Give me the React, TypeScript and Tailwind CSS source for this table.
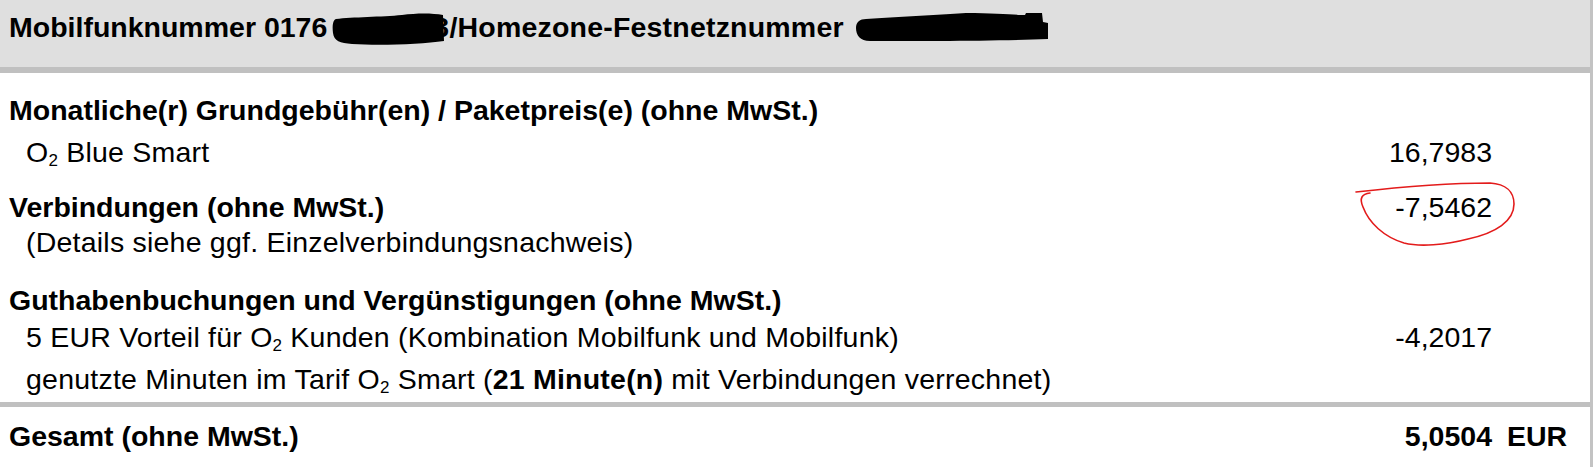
import React from "react";

function Row({
  label,
  value,
  after,
}: {
  label: React.ReactNode;
  value?: string;
  after?: React.ReactNode;
}) {
  return (
    <div className="flex h-[28px] whitespace-nowrap">
      <div className="flex-1 pl-[26px] tracking-[0.22px]">{label}</div>
      <div className="text-right">{value}</div>
      <div className="w-[98px] shrink-0">{after}</div>
    </div>
  );
}

function O2() {
  return (
    <>
      O<sub className="text-[17px]">2</sub>
    </>
  );
}

export default function App() {
  return (
    <div className="relative w-full h-[467px] bg-white text-black font-['Liberation_Sans',Arial,sans-serif] text-[28.5px] leading-[28px] border-r-[3px] border-[#c3c3c3] overflow-hidden">
      <header className="h-[73px] bg-[#dfdfdf] border-b-[6px] border-[#c0c0c0] pl-[9px] pt-[13px] flex items-start font-bold whitespace-nowrap">
        <span>Mobilfunknummer 0176</span>
        <svg
          width="112"
          height="33"
          viewBox="0 0 112 33"
          className="relative z-10 ml-[5px] -mr-[11px] shrink-0"
        >
          <path
            d="M4 6 C20 4 50 4 70 2 C85 0 100 0 111 2 L112 28 C90 31 50 33 20 31 C8 30 2 28 1 20 C0 12 1 7 4 6 Z"
            fill="#000"
          />
        </svg>
        <span className="tracking-[0.2px]">3/Homezone-Festnetznummer</span>
        <svg
          width="193"
          height="29"
          viewBox="0 0 193 29"
          className="ml-[12px] shrink-0"
        >
          <path
            d="M10 6 C40 4 80 2 110 0 C140 0 160 2 169 2 L170 0 L186 0 L187 9 L192 10 L192 26 C140 28 60 28 14 28 C4 28 0 22 0 15 C0 9 4 6 10 6 Z"
            fill="#000"
          />
        </svg>
      </header>

      <div className="mt-[23px] h-[28px] pl-[9px] font-bold whitespace-nowrap">
        Monatliche(r) Grundgebühr(en) / Paketpreis(e) (ohne MwSt.)
      </div>
      <div className="mt-[14px]">
        <Row
          label={
            <>
              <O2 /> Blue Smart
            </>
          }
          value="16,7983"
        />
      </div>

      <div className="mt-[27px] flex h-[28px] whitespace-nowrap">
        <div className="flex-1 pl-[9px] font-bold">Verbindungen (ohne MwSt.)</div>
        <div className="text-right">-7,5462</div>
        <div className="w-[98px] shrink-0" />
      </div>
      <div className="mt-[7px]">
        <Row label="(Details siehe ggf. Einzelverbindungsnachweis)" />
      </div>

      <div className="mt-[30px] h-[28px] pl-[9px] font-bold whitespace-nowrap">
        Guthabenbuchungen und Vergünstigungen (ohne MwSt.)
      </div>
      <div className="mt-[9px]">
        <Row
          label={
            <>
              5 EUR Vorteil für <O2 /> Kunden (Kombination Mobilfunk und
              Mobilfunk)
            </>
          }
          value="-4,2017"
        />
      </div>
      <div className="mt-[14px]">
        <Row
          label={
            <>
              genutzte Minuten im Tarif <O2 /> Smart (
              <span className="font-bold">21 Minute(n)</span> mit Verbindungen
              verrechnet)
            </>
          }
        />
      </div>

      <div className="mt-[9px] h-[5px] bg-[#c0c0c0]" />

      <div className="mt-[15px] flex h-[28px] whitespace-nowrap font-bold">
        <div className="flex-1 pl-[9px]">Gesamt (ohne MwSt.)</div>
        <div className="text-right">5,0504</div>
        <div className="w-[98px] shrink-0 pl-[15px]">EUR</div>
      </div>

      <svg
        className="pointer-events-none absolute left-0 top-0"
        width="1593"
        height="467"
        viewBox="0 0 1593 467"
      >
        <path
          d="M1356 192 C1400 187 1450 183 1490 183 C1506 184 1514 192 1514 204 C1514 221 1496 233 1468 239 C1445 245 1420 247 1404 243 C1384 237 1369 223 1363 207 C1359 198 1362 194 1370 193"
          fill="none"
          stroke="#e31b1b"
          strokeWidth="1.6"
          strokeLinecap="round"
        />
      </svg>
    </div>
  );
}
